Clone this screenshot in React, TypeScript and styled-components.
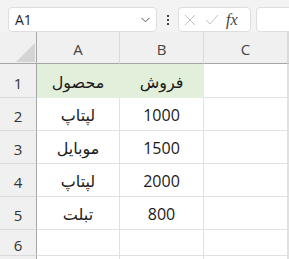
import styled, { createGlobalStyle } from 'styled-components';

const GlobalStyle = createGlobalStyle`
  html, body {
    margin: 0;
    padding: 0;
    background: #ffffff;
    overflow: hidden;
  }
  body {
    font-family: "Open Sans", "DejaVu Sans", sans-serif;
  }
`;

const Window = styled.div`
  width: 289px;
  height: 259px;
  overflow: hidden;
  background: #ffffff;
`;

const FormulaBar = styled.div`
  display: flex;
  align-items: flex-start;
  height: 32px;
  padding: 7px 0 0 8px;
  box-sizing: border-box;
  background: #f3f3f3;
`;

const Box = styled.div<{ $width: number }>`
  display: flex;
  align-items: center;
  flex: none;
  width: ${(p) => p.$width}px;
  height: 25px;
  box-sizing: border-box;
  background: #ffffff;
  border: 1px solid #dedede;
  border-radius: 4px;
`;

const NameText = styled.span`
  flex: 1;
  padding-left: 6px;
  font-size: 14px;
  color: #1f1f1f;
`;

const Chevron = styled.svg`
  margin-right: 6px;
`;

const Dots = styled.div`
  display: flex;
  flex-direction: column;
  align-items: center;
  justify-content: center;
  gap: 2px;
  width: 21px;
  height: 25px;
  flex: none;

  span {
    width: 2px;
    height: 2px;
    background: #444;
  }
`;

const IconSlot = styled.div`
  display: flex;
  align-items: center;
  justify-content: center;
  width: 22px;
  height: 23px;
`;

const Fx = styled.span`
  font-family: "Liberation Serif", "DejaVu Serif", serif;
  font-style: italic;
  font-size: 16px;
  color: #444;
  margin-left: 3px;
`;

const Sheet = styled.div`
  display: grid;
  grid-template-columns: 37px 83px 84px 84px 1fr;
  grid-template-rows: 32px 34px repeat(4, 33px) 26px 33px;
`;

const Corner = styled.div`
  position: relative;
  background: #f0f0f0;
  border-right: 1px solid #a6a6a6;
  border-bottom: 1px solid #a6a6a6;
  box-sizing: border-box;
`;

const CornerMark = styled.svg`
  position: absolute;
  right: 1px;
  bottom: 1px;
`;

const ColHead = styled.div`
  display: flex;
  align-items: center;
  justify-content: center;
  background: #f0f0f0;
  border-right: 1px solid #dadada;
  border-bottom: 1px solid #a6a6a6;
  box-sizing: border-box;
  font-size: 15px;
  color: #444;
  padding-top: 2px;
`;

const RowHead = styled.div`
  display: flex;
  align-items: center;
  justify-content: center;
  background: #f0f0f0;
  border-right: 1px solid #a6a6a6;
  border-bottom: 1px solid #dadada;
  box-sizing: border-box;
  font-size: 15px;
  color: #333;
  padding-top: 4px;
`;

const Cell = styled.div<{ $fill?: string }>`
  display: flex;
  align-items: center;
  justify-content: center;
  background: ${(p) => p.$fill || '#ffffff'};
  border-right: 1px solid ${(p) => p.$fill || '#e1e1e1'};
  border-bottom: 1px solid ${(p) => p.$fill || '#e1e1e1'};
  box-sizing: border-box;
  font-size: 16px;
  color: #1a1a1a;
  padding-top: 2px;
`;

const cols = ['A', 'B', 'C', ''];

const rows: string[][] = [
  ['محصول', 'فروش'],
  ['لپتاپ', '1000'],
  ['موبایل', '1500'],
  ['لپتاپ', '2000'],
  ['تبلت', '800'],
  ['', ''],
  ['', ''],
];

export default function App() {
  return (
    <>
      <GlobalStyle />
      <Window>
        <FormulaBar>
          <Box $width={149}>
            <NameText>A1</NameText>
            <Chevron width="9" height="6" viewBox="0 0 9 6">
              <path d="M0.5 0.8 L4.5 4.8 L8.5 0.8" fill="none" stroke="#555" strokeWidth="1" />
            </Chevron>
          </Box>
          <Dots>
            <span />
            <span />
            <span />
          </Dots>
          <Box $width={73} style={{ marginRight: 5 }}>
            <IconSlot>
              <svg width="12" height="12" viewBox="0 0 12 12">
                <path d="M1 1 L11 11 M11 1 L1 11" stroke="#c2c2c2" strokeWidth="1" />
              </svg>
            </IconSlot>
            <IconSlot>
              <svg width="14" height="11" viewBox="0 0 14 11">
                <path d="M1 6 L5 10 L13 1" fill="none" stroke="#c2c2c2" strokeWidth="1" />
              </svg>
            </IconSlot>
            <Fx>fx</Fx>
          </Box>
          <Box $width={40} />
        </FormulaBar>
        <Sheet>
          <Corner>
            <CornerMark width="19" height="19" viewBox="0 0 19 19">
              <polygon points="19,0 19,19 0,19" fill="#d4d4d4" />
            </CornerMark>
          </Corner>
          {cols.map((c, i) => (
            <ColHead key={i}>{c}</ColHead>
          ))}
          {rows.map((r, ri) => (
            <>
              <RowHead key={'h' + ri}>{ri < 6 ? ri + 1 : ''}</RowHead>
              <Cell key={'a' + ri} $fill={ri === 0 ? '#e2efda' : undefined} dir="rtl">
                {r[0]}
              </Cell>
              <Cell key={'b' + ri} $fill={ri === 0 ? '#e2efda' : undefined} dir={ri === 0 ? 'rtl' : 'ltr'}>
                {r[1]}
              </Cell>
              <Cell key={'c' + ri} />
              <Cell key={'d' + ri} />
            </>
          ))}
        </Sheet>
      </Window>
    </>
  );
}
